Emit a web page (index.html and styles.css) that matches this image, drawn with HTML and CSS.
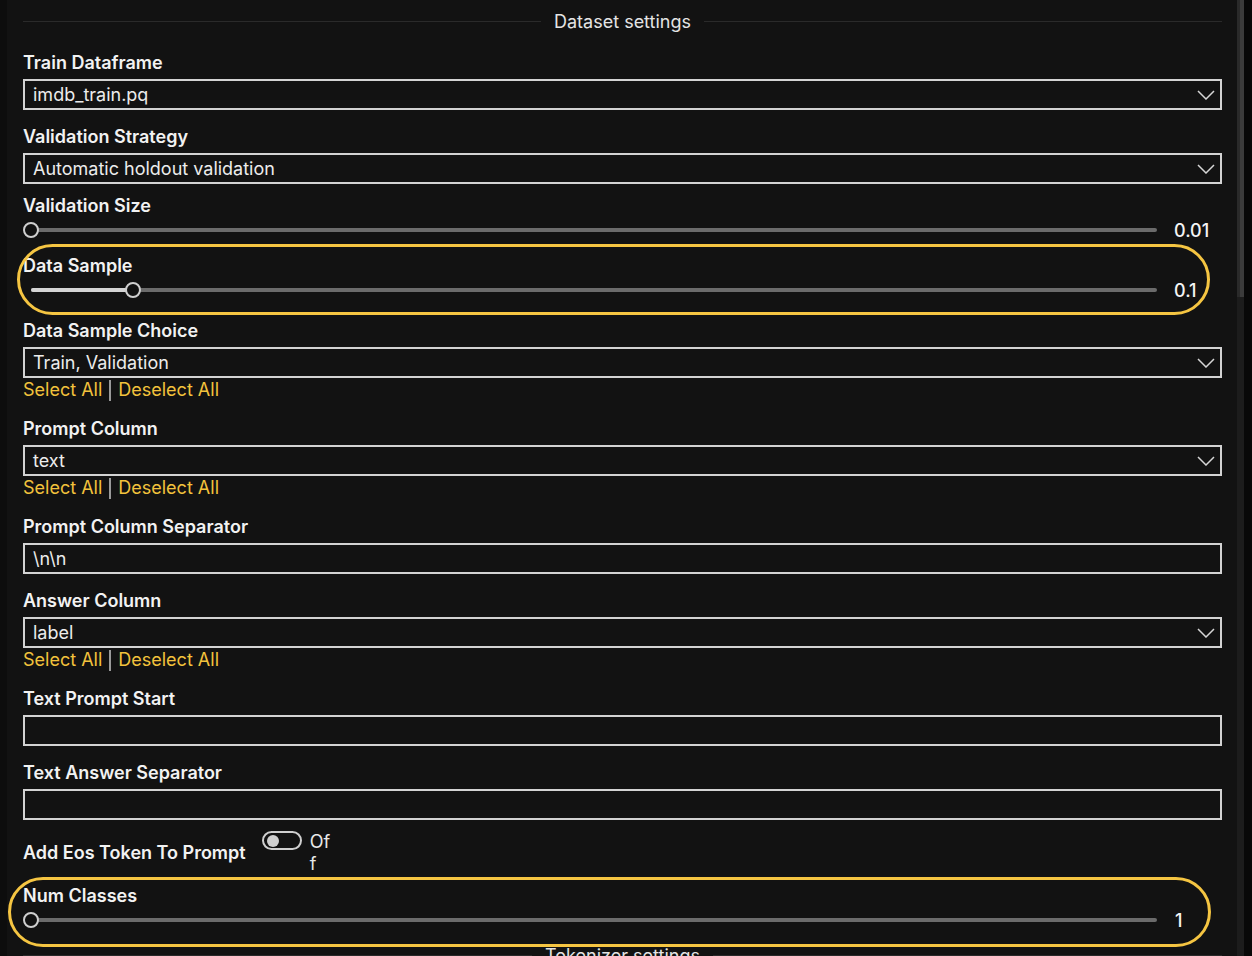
FILE: index.html
```html
<!DOCTYPE html>
<html lang="en">
<head>
<meta charset="utf-8">
<title>Dataset settings</title>
<link rel="stylesheet" href="styles.css">
</head>
<body>
<div class="app">
  <div class="edge-left"></div>
  <main class="panel">
    <div class="section-head">
      <span class="section-line"></span>
      <span class="section-title">Dataset settings</span>
      <span class="section-line"></span>
    </div>

    <div class="field field--first">
      <label class="field-label">Train Dataframe</label>
      <div class="input select"><span>imdb_train.pq</span>
        <svg class="chevron" width="18" height="10" viewBox="0 0 18 10"><polyline points="1,1 9,9 17,1"/></svg></div>
    </div>

    <div class="field">
      <label class="field-label">Validation Strategy</label>
      <div class="input select"><span>Automatic holdout validation</span>
        <svg class="chevron" width="18" height="10" viewBox="0 0 18 10"><polyline points="1,1 9,9 17,1"/></svg></div>
    </div>

    <div class="field field--slider">
      <label class="field-label">Validation Size</label>
      <div class="slider-row">
        <div class="track"><span class="thumb" style="left:0%"></span></div>
        <span class="slider-value">0.01</span>
      </div>
    </div>

    <div class="field field--slider field--highlight">
      <span class="highlight highlight--sample"></span>
      <label class="field-label">Data Sample</label>
      <div class="slider-row">
        <div class="track"><span class="fill" style="width:9.06%"></span><span class="thumb" style="left:9.06%"></span></div>
        <span class="slider-value">0.1</span>
      </div>
    </div>

    <div class="field">
      <label class="field-label">Data Sample Choice</label>
      <div class="input select"><span>Train, Validation</span>
        <svg class="chevron" width="18" height="10" viewBox="0 0 18 10"><polyline points="1,1 9,9 17,1"/></svg></div>
      <div class="links"><a class="link">Select All</a><span class="divider"></span><a class="link">Deselect All</a></div>
    </div>

    <div class="field field--after-links">
      <label class="field-label">Prompt Column</label>
      <div class="input select"><span>text</span>
        <svg class="chevron" width="18" height="10" viewBox="0 0 18 10"><polyline points="1,1 9,9 17,1"/></svg></div>
      <div class="links"><a class="link">Select All</a><span class="divider"></span><a class="link">Deselect All</a></div>
    </div>

    <div class="field field--after-links">
      <label class="field-label">Prompt Column Separator</label>
      <div class="input"><span>\n\n</span></div>
    </div>

    <div class="field">
      <label class="field-label">Answer Column</label>
      <div class="input select"><span>label</span>
        <svg class="chevron" width="18" height="10" viewBox="0 0 18 10"><polyline points="1,1 9,9 17,1"/></svg></div>
      <div class="links"><a class="link">Select All</a><span class="divider"></span><a class="link">Deselect All</a></div>
    </div>

    <div class="field field--after-links">
      <label class="field-label">Text Prompt Start</label>
      <div class="input"></div>
    </div>

    <div class="field">
      <label class="field-label">Text Answer Separator</label>
      <div class="input"></div>
    </div>

    <div class="toggle-row">
      <label class="field-label toggle-label">Add Eos Token To Prompt</label>
      <span class="toggle"><span class="knob"></span></span>
      <span class="toggle-text">Off</span>
    </div>

    <div class="field field--slider field--highlight field--num">
      <span class="highlight highlight--num"></span>
      <label class="field-label">Num Classes</label>
      <div class="slider-row">
        <div class="track"><span class="thumb" style="left:0%"></span></div>
        <span class="slider-value slider-value--num">1</span>
      </div>
    </div>

    <div class="section-head section-head--next">
      <span class="section-line"></span>
      <span class="section-title">Tokenizer settings</span>
      <span class="section-line"></span>
    </div>
  </main>
  <div class="scrollbar"><div class="scroll-thumb"></div></div>
  <div class="edge-right"></div>
</div>
</body>
</html>
```

FILE: styles.css
```css
* { box-sizing: border-box; }

html, body {
  margin: 0;
  padding: 0;
  background: #121212;
  height: 956px;
  overflow: hidden;
}

body {
  font-family: Inter, "Noto Sans", "Liberation Sans", sans-serif;
  color: #ececec;
  font-size: 18px;
  line-height: 22px;
}

.app {
  display: flex;
  height: 956px;
  overflow: hidden;
}

.edge-left {
  width: 7px;
  flex: none;
  background: #0d0d0d;
}

.edge-right {
  width: 8px;
  flex: none;
  background: #080808;
}

.scrollbar {
  width: 7px;
  flex: none;
  background: #1c1c1c;
}

.scroll-thumb {
  height: 297px;
  background: #3b3b3b;
  border-left: 3px solid #2a2a2a;
}

.panel {
  flex: 1;
  min-width: 0;
  padding: 11px 15px 0 16px;
  display: flex;
  flex-direction: column;
}

.section-head {
  display: flex;
  align-items: center;
  gap: 13px;
  height: 22px;
  flex: none;
}

.section-head--next {
  margin-top: 11px;
}

.section-line {
  flex: 1;
  height: 1px;
  background: #2a2a2a;
  margin-top: -1px;
}

.section-title {
  color: #e4e4e4;
  font-size: 18px;
  white-space: nowrap;
}

.field {
  position: relative;
  display: flex;
  flex-direction: column;
  margin-top: 16px;
  flex: none;
}

.field--first { margin-top: 19px; }
.field--after-links { margin-top: 17px; }
.field--slider { margin-top: 11px; }
.field--num { margin-top: 10px; }

.field-label {
  font-weight: 600;
  font-size: 18px;
  line-height: 22px;
  color: #f2f2f2;
  margin-bottom: 5px;
}

.field--slider .field-label { margin-bottom: 0; }

.input {
  height: 31px;
  border: 2px solid #d3d3d3;
  background: #121212;
  padding: 0 5px 0 8px;
  display: flex;
  align-items: center;
  justify-content: space-between;
  font-size: 18px;
  color: #ececec;
}

.input span {
  margin-top: 1px;
}

.chevron {
  flex: none;
}

.chevron polyline {
  fill: none;
  stroke: #d6d6d6;
  stroke-width: 1.5;
}

.links {
  display: flex;
  align-items: center;
  height: 22px;
  margin-top: 1px;
  font-size: 18px;
}

.link {
  color: #f2c23c;
}

.divider {
  width: 2px;
  height: 21px;
  background: #9a9a9a;
  margin: 0 7px 0 7px;
}

.slider-row {
  display: flex;
  align-items: center;
  height: 28px;
  margin-top: -1px;
}

.track {
  position: relative;
  flex: 1;
  height: 4px;
  margin-left: 8px;
  border-radius: 2px;
  background: #6b6b6b;
}

.fill {
  position: absolute;
  left: 0;
  top: 0;
  height: 4px;
  border-radius: 2px;
  background: #d4d4d4;
}

.thumb {
  position: absolute;
  top: 50%;
  width: 16px;
  height: 16px;
  border-radius: 50%;
  border: 2px solid #cfcfcf;
  background: #121212;
  transform: translate(-50%, -50%);
}

.slider-value {
  width: 48px;
  margin-left: 17px;
  font-weight: 500;
  color: #f4f4f4;
  flex: none;
  margin-top: 2px;
}

.slider-value--num {
  padding-left: 1px;
}

.highlight {
  position: absolute;
  border: 3px solid #f5c542;
  border-radius: 36px;
  pointer-events: none;
}

.highlight--sample {
  left: -6px;
  right: 12px;
  top: -11px;
  height: 71px;
}

.highlight--num {
  left: -15px;
  right: 11px;
  top: -8px;
  height: 70px;
}

.toggle-row {
  display: flex;
  align-items: flex-start;
  margin-top: 10px;
  flex: none;
}

.toggle-label {
  margin-top: 12px;
  margin-bottom: 0;
}

.toggle {
  position: relative;
  width: 40px;
  height: 19px;
  margin-left: 16px;
  margin-top: 1px;
  border: 2px solid #cfcfcf;
  border-radius: 10px;
  flex: none;
}

.knob {
  position: absolute;
  left: 3px;
  top: 1.5px;
  width: 12px;
  height: 12px;
  border-radius: 50%;
  background: #d0d0d0;
}

.toggle-text {
  width: 22px;
  margin-left: 8px;
  margin-top: 1px;
  word-break: break-all;
  color: #e8e8e8;
  font-size: 18px;
  line-height: 22px;
}
```
